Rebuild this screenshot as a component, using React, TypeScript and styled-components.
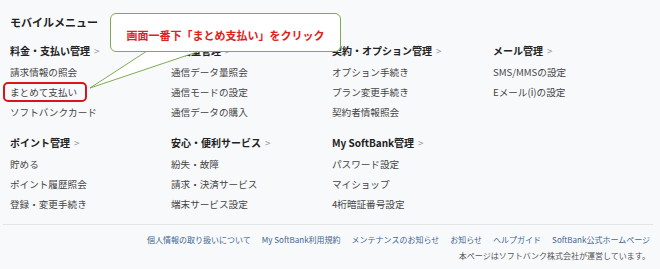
import React from 'react';
import styled, { createGlobalStyle, css } from 'styled-components';

const GlobalStyle = createGlobalStyle`
  html, body {
    margin: 0;
    padding: 0;
    background: #f8f9fb;
  }
  body {
    font-family: "Noto Sans CJK JP", "Noto Sans", sans-serif;
  }
`;

interface MenuGroup {
  title: string;
  items: string[];
}

const topGroups: MenuGroup[] = [
  { title: '料金・支払い管理', items: ['請求情報の照会', 'まとめて支払い', 'ソフトバンクカード'] },
  { title: '通信量管理', items: ['通信データ量照会', '通信モードの設定', '通信データの購入'] },
  { title: '契約・オプション管理', items: ['オプション手続き', 'プラン変更手続き', '契約者情報照会'] },
  { title: 'メール管理', items: ['SMS/MMSの設定', 'Eメール(i)の設定'] },
];

const bottomGroups: MenuGroup[] = [
  { title: 'ポイント管理', items: ['貯める', 'ポイント履歴照会', '登録・変更手続き'] },
  { title: '安心・便利サービス', items: ['紛失・故障', '請求・決済サービス', '端末サービス設定'] },
  { title: 'My SoftBank管理', items: ['パスワード設定', 'マイショップ', '4桁暗証番号設定'] },
];

const footerLinks = [
  '個人情報の取り扱いについて',
  'My SoftBank利用規約',
  'メンテナンスのお知らせ',
  'お知らせ',
  'ヘルプガイド',
  'SoftBank公式ホームページ',
];

const Page = styled.div`
  position: relative;
  width: 660px;
  height: 269px;
  padding: 13px 7px 0 3px;
  box-sizing: border-box;
  overflow: hidden;
`;

const Title = styled.h1`
  margin: 0 0 10px;
  padding-left: 7px;
  font-size: 11px;
  line-height: 18px;
  font-weight: bold;
  color: #222;
`;

const Grid = styled.div<{ $gap: number }>`
  display: grid;
  grid-template-columns: repeat(4, 161px);
  padding-left: 7px;
  margin-bottom: ${(p) => p.$gap}px;
`;

const Column = styled.div`
  display: flex;
  flex-direction: column;
  align-items: flex-start;
`;

const GroupTitle = styled.div`
  font-size: 10px;
  line-height: 20px;
  font-weight: bold;
  color: #222;
  margin-bottom: 1px;
  white-space: nowrap;
`;

const Chevron = styled.span`
  margin-left: 4px;
  font-weight: normal;
  color: #999;
`;

const Item = styled.div<{ $highlight?: boolean }>`
  position: relative;
  font-size: 9.6px;
  line-height: 20px;
  color: #444;
  white-space: nowrap;

  ${(p) =>
    p.$highlight &&
    css`
      &::after {
        content: '';
        position: absolute;
        left: -7px;
        right: -10px;
        top: 0;
        bottom: 0;
        border: 2.5px solid #d8141c;
        border-radius: 5px;
      }
    `}
`;

const Divider = styled.hr`
  margin: 0;
  border: none;
  border-top: 1px solid #e2e4e8;
`;

const Footer = styled.div`
  padding: 8px 3px 0 0;
  display: flex;
  flex-direction: column;
  align-items: flex-end;
  gap: 2px;
`;

const LinkRow = styled.div`
  display: flex;
  gap: 11px;
`;

const FooterLink = styled.a`
  font-size: 8px;
  line-height: 14px;
  color: #3d6891;
  text-decoration: none;
  white-space: nowrap;
`;

const Copyright = styled.div`
  font-size: 8px;
  line-height: 14px;
  color: #555;
  white-space: nowrap;
`;

const Tail = styled.svg`
  position: absolute;
  left: 0;
  top: 0;
  width: 660px;
  height: 269px;
  pointer-events: none;
`;

const Callout = styled.div`
  position: absolute;
  left: 110px;
  top: 13px;
  width: 231px;
  height: 39px;
  box-sizing: border-box;
  border: 1px solid #7eab52;
  border-radius: 6px;
  background: #fff;
  display: flex;
  align-items: center;
  justify-content: center;
  padding-top: 5px;
  font-size: 11px;
  font-weight: bold;
  color: #e0201b;
  white-space: nowrap;
`;

const MenuGrid: React.FC<{ groups: MenuGroup[]; gap: number }> = ({ groups, gap }) => (
  <Grid $gap={gap}>
    {groups.map((g) => (
      <Column key={g.title}>
        <GroupTitle>
          {g.title}
          <Chevron>&gt;</Chevron>
        </GroupTitle>
        {g.items.map((it) => (
          <Item key={it} $highlight={it === 'まとめて支払い'}>
            {it}
          </Item>
        ))}
      </Column>
    ))}
  </Grid>
);

export default function App() {
  return (
    <>
      <GlobalStyle />
      <Page>
        <Title>モバイルメニュー</Title>
        <MenuGrid groups={topGroups} gap={11} />
        <MenuGrid groups={bottomGroups} gap={10} />
        <Divider />
        <Footer>
          <LinkRow>
            {footerLinks.map((l) => (
              <FooterLink key={l} href="#">
                {l}
              </FooterLink>
            ))}
          </LinkRow>
          <Copyright>本ページはソフトバンク株式会社が運営しています。</Copyright>
        </Footer>

        <Tail viewBox="0 0 660 269">
          <polygon points="147,51 90,88 200,51" fill="#fff" stroke="#7eab52" strokeWidth="1" />
        </Tail>
        <Callout>画面一番下「まとめ支払い」をクリック</Callout>
      </Page>
    </>
  );
}
